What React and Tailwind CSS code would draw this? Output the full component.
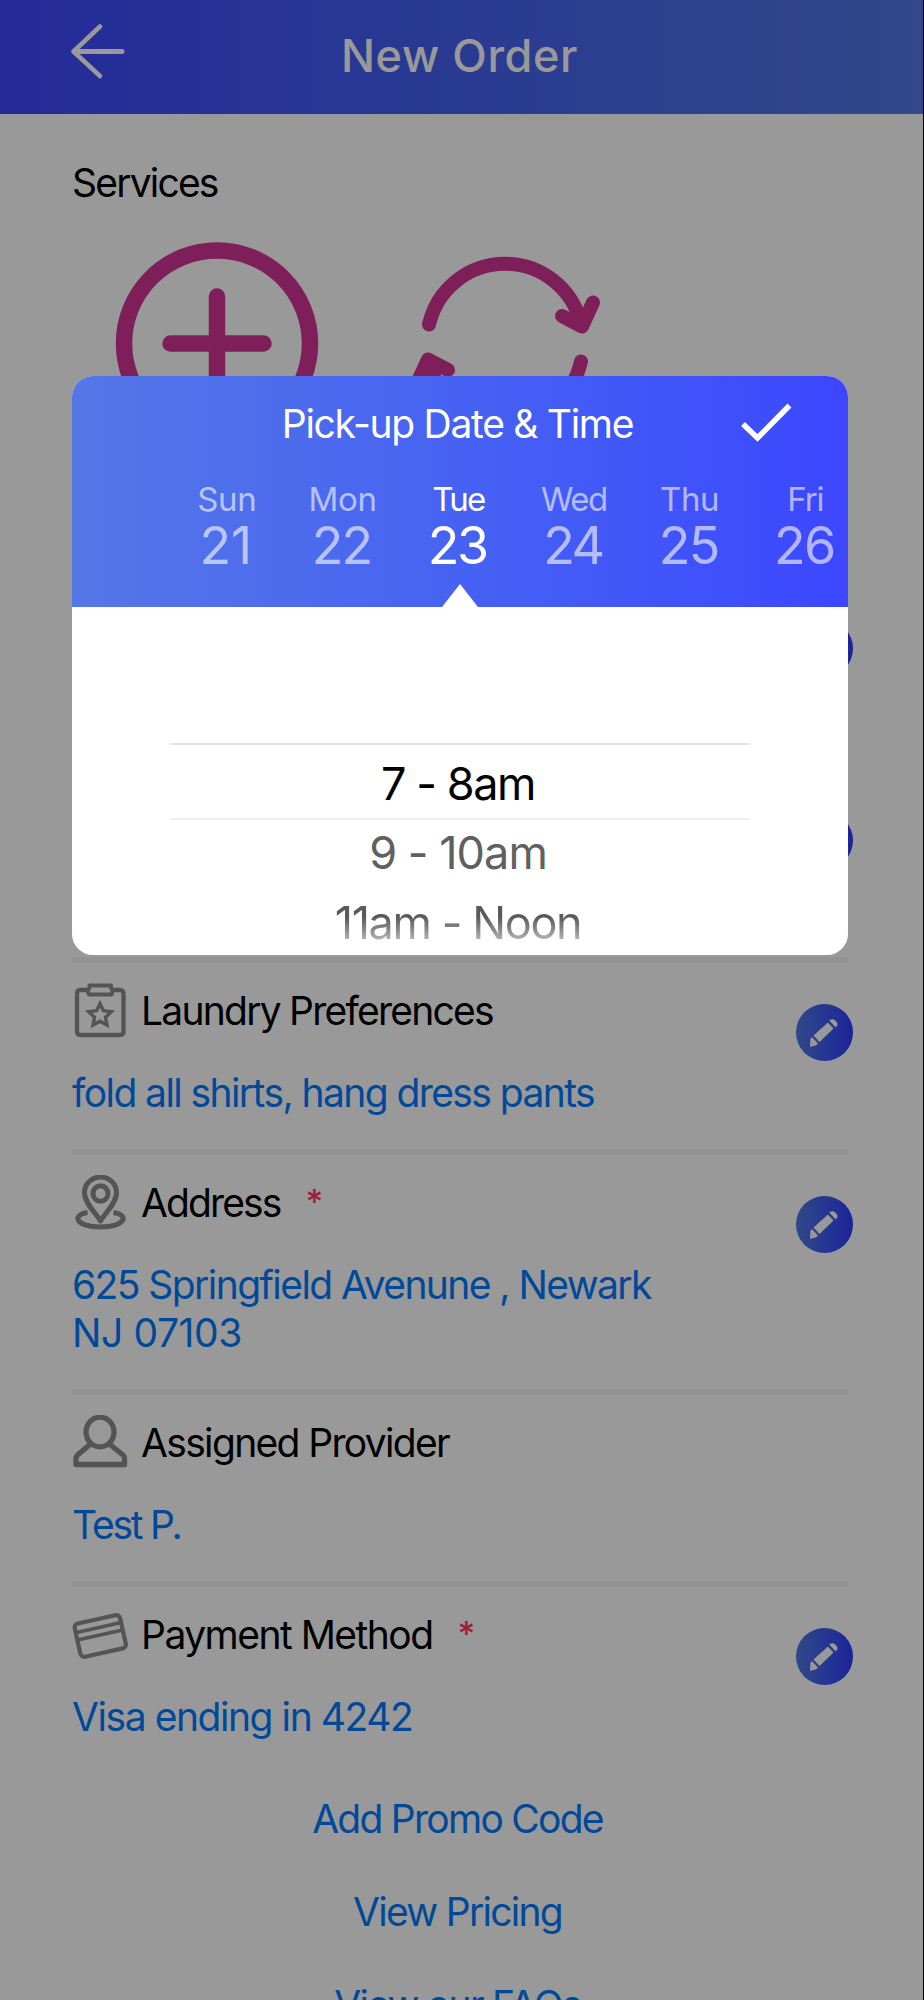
const days = [
  { name: "Sun", date: 21, nameTracking: "tracking-[-0.01em]",  dateTracking: "tracking-normal" },
  { name: "Mon", date: 22, nameTracking: "tracking-[-0.01em]",  dateTracking: "tracking-[-0.035em]" },
  { name: "Tue", date: 23, nameTracking: "tracking-[-0.055em]", dateTracking: "tracking-[-0.045em]" },
  { name: "Wed", date: 24, nameTracking: "tracking-[-0.045em]", dateTracking: "tracking-[-0.05em]" },
  { name: "Thu", date: 25, nameTracking: "tracking-[-0.012em]", dateTracking: "tracking-[-0.035em]" },
  { name: "Fri", date: 26, nameTracking: "tracking-[-0.035em]", dateTracking: "tracking-[-0.035em]" },
]

const links = ["Add Promo Code", "View Pricing", "View our FAQs"]

function BackArrow() {
  return (
    <svg width="60" height="60" viewBox="0 0 60 60" fill="none" stroke="#fff" strokeWidth="5" strokeLinecap="round" strokeLinejoin="round">
      <path d="M32 4.500 5.500 29.500 32 54" strokeWidth="4.500" />
      <path d="M6 29.500H54" />
    </svg>
  )
}

function PlusCircle() {
  return (
    <svg width="262" height="262" viewBox="0 0 262 262" fill="none" stroke="#d43594" strokeWidth="16.500" strokeLinecap="round">
      <circle cx="132" cy="101.500" r="93" />
      <path d="M132 54.500v94M85.500 101.500h93" />
    </svg>
  )
}

function RepeatArrows() {
  return (
    <svg width="262" height="262" viewBox="0 0 262 262" fill="#d43594" stroke="#d43594" strokeWidth="14" strokeLinecap="round" strokeLinejoin="round">
      <path d="M56 82.500A78 78 0 0 1 208 82" fill="none" />
      <path d="M189 74 209 84.500 220 60.500" fill="none" />
      <path d="M198 74 209 84 213 72Z" strokeWidth="4" />
      <path d="M208 119.500A78 78 0 0 1 56 120" fill="none" />
      <path d="M75 128 55 117.500 44 141.500" fill="none" />
      <path d="M66 128 55 118 51 130Z" strokeWidth="4" />
    </svg>
  )
}

function ClipboardIcon() {
  return (
    <svg width="56" height="56" viewBox="0 0 56 56" fill="none" stroke="#8c8c8c" strokeWidth="4.300" strokeLinejoin="round">
      <path d="M16 7H8.500Q5 7 5 10.500V48.500Q5 52 8.500 52H48Q51.500 52 51.500 48.500V10.500Q51.500 7 48 7H40.500" />
      <path d="M17.500 2.500H39V5L41 7.500 39.500 11.500H17L15.500 7.500 17.500 5Z" strokeWidth="4" />
      <path d="M28 20.500 31.400 27.700 39.300 28.800 33.500 34.200 35 42 28 38.200 21 42 22.500 34.200 16.700 28.800 24.600 27.700Z" strokeWidth="3.400" strokeLinejoin="miter" />
    </svg>
  )
}

function PinIcon() {
  return (
    <svg width="56" height="56" viewBox="0 0 56 56" fill="none" stroke="#8c8c8c" strokeWidth="5" strokeLinejoin="round">
      <path d="M28.500 46C24 38 12.500 28.500 12.500 17.500A16 15.500 0 0 1 44.500 17.500C44.500 28.500 33 38 28.500 46Z" />
      <ellipse cx="28.500" cy="18.500" rx="7.500" ry="7.800" />
      <path d="M15.500 37.500C-1 40 4 52 28.500 52S58 40 41.500 37.500" />
    </svg>
  )
}

function PersonIcon() {
  return (
    <svg width="56" height="56" viewBox="0 0 56 56" fill="none" stroke="#8c8c8c" strokeWidth="5.300" strokeLinejoin="round">
      <ellipse cx="28" cy="17" rx="14" ry="14.800" />
      <path d="M18 29.500 5.500 40Q4 41.500 4 43.500V49.500H52.500V43.500Q52.500 41.500 51 40L38 29.500" />
    </svg>
  )
}

function CardIcon() {
  return (
    <svg width="56" height="56" viewBox="0 0 56 56" fill="none" stroke="#8c8c8c" strokeWidth="4.200" strokeLinejoin="round">
      <g transform="rotate(-12.500 28 29)">
        <rect x="5" y="12" width="46.500" height="34" rx="4" />
        <path d="M5 20.500H51.500M5 28H51.500" strokeWidth="3.600" />
      </g>
    </svg>
  )
}

function PencilIcon() {
  return (
    <svg width="30" height="30" viewBox="0 0 30 30" fill="#fff">
      <path d="M4.500 17.500 19 4.500 24.500 10.500 10.500 24Z" />
      <path d="M1 29 1.500 20.500Q2.500 18.800 4 20.200L8.600 25Q8.800 26.800 7 27.300Z" />
      <path d="M20.300 2.800Q23 .2 26 2.300L28 4.500Q29.500 7 26.500 9.300Z" />
    </svg>
  )
}

function EditButton() {
  return (
    <button className="flex size-[57px] items-center justify-center rounded-full bg-linear-to-r from-[#5577e6] to-[#3038ff]">
      <PencilIcon />
    </button>
  )
}

function Section({ icon: Icon, title, tracking, required, editable, children }) {
  return (
    <section className="flex min-h-48 justify-between border-t-[6px] border-[#f6f6f6] pb-[32px]">
      <div className="pt-[24px]">
        <h2 className="flex h-12 items-center text-[39px] leading-[48px] text-black">
          {Icon && <Icon />}
          {title && <span className={`ml-[13px] ${tracking}`}>{title}</span>}
          {required && <span className="ml-[25px] h-12 text-[34px] leading-[46px] font-medium text-[#ff3860]">*</span>}
        </h2>
        <div className="mt-[34px] text-[39px] leading-[48px] whitespace-nowrap text-[#007aff]">{children}</div>
      </div>
      {editable && <div className="-mr-[4.500px] pt-[41px]"><EditButton /></div>}
    </section>
  )
}

function DayPicker() {
  return (
    <div className="ml-[97px] flex flex-1 pt-[33px]">
      {days.map(({ name, date, nameTracking, dateTracking }) => {
        const active = name === "Tue"
        return (
          <div key={name} className={`flex w-[115.700px] shrink-0 flex-col items-center ${active ? "text-white" : "text-white/60"}`}>
            <span className={`text-[33px] leading-[38px] ${nameTracking}`}>{name}</span>
            <span className={`mr-[2px] text-[52px] leading-[56px] ${dateTracking}`}>{date}</span>
            {active && (
              <svg className="mt-auto ml-[3px]" width="36" height="23" viewBox="0 0 36 23" fill="#fff">
                <path d="M18 0 36 23H0Z" />
              </svg>
            )}
          </div>
        )
      })}
    </div>
  )
}

function PickupDialog() {
  return (
    <div className="h-[579px] w-[776px] overflow-hidden rounded-[21px] bg-white">
      <div className="flex h-[231px] flex-col bg-linear-to-r from-[#5577e6] to-[#3c46ff]">
        <div className="flex h-[71px] items-end">
          <h3 className="-mb-px ml-[105px] flex-1 text-center text-[39px] leading-[48px] tracking-[-0.033em] text-white">Pick-up Date &amp; Time</h3>
          <button className="w-[110px] pb-[2px]">
            <svg width="56" height="44" viewBox="0 0 56 44" fill="none" stroke="#fff" strokeWidth="5.500">
              <path d="M5 23 19.500 37 51.500 4.500" />
            </svg>
          </button>
        </div>
        <DayPicker />
      </div>

      {/* Time wheel */}
      <div className="mx-[98px] pt-[136px] text-center text-[45px]">
        <div className="flex h-[77px] items-center justify-center border-t-2 border-b-2 border-t-[#e4e4e4] border-b-[#efefef] pt-[4px] pr-[4px] tracking-[-0.031em] text-black">7 - 8am</div>
        <div className="h-[66px] pr-[4px] leading-[66px] tracking-[-0.021em] text-[#606060]">9 - 10am</div>
        <div className="h-[69px] bg-linear-to-b from-[#5a5a5a] from-45% to-[#b4b4b4] to-78% bg-clip-text pr-[4px] leading-[73px] tracking-[-0.031em] text-transparent">11am - Noon</div>
      </div>
    </div>
  )
}

export default function App() {
  return (
    <div className="relative h-[2000px] w-[924px] overflow-hidden border-r border-black bg-white font-['Inter',sans-serif]">
      <header className="flex h-[114px] bg-linear-to-r from-[#3c46ff] to-[#5577e6] px-[68px]">
        <button className="h-15 w-15 pt-[22px]"><BackArrow /></button>
        <h1 className="flex-1 pt-[29px] text-center text-[45px] leading-[54px] font-medium tracking-[0.013em] text-white">New Order</h1>
        <div className="w-16" />
      </header>

      <main className="mr-[75px] ml-[72px]">
        <div className="h-[459px] pt-[45px]">
          <h2 className="text-[39px] leading-[48px] tracking-[-0.046em] text-black">Services</h2>
          <div className="mt-[35px] ml-[13px] flex gap-[26px]">
            <PlusCircle />
            <RepeatArrows />
          </div>
        </div>

        <Section editable />
        <Section editable />
        <Section icon={ClipboardIcon} title="Laundry Preferences" tracking="tracking-[-0.045em]" editable>
          <span className="tracking-[-0.0405em]">fold all shirts, hang dress pants</span>
        </Section>
        <Section icon={PinIcon} title="Address" tracking="tracking-[-0.048em]" required editable>
          <span className="block tracking-[-0.0404em]">625 Springfield Avenune , Newark</span>
          <span className="block tracking-[-0.01em]">NJ 07103</span>
        </Section>
        <Section icon={PersonIcon} title="Assigned Provider" tracking="tracking-[-0.0425em]">
          <span className="tracking-[-0.057em]">Test P.</span>
        </Section>
        <Section icon={CardIcon} title="Payment Method" tracking="tracking-[-0.039em]" required editable>
          <span className="tracking-[-0.0368em]">Visa ending in 4242</span>
        </Section>

        <div className="flex flex-col items-center gap-[45px] pt-[22px] pr-[5px] text-[39px] leading-[48px] tracking-[-0.0445em] text-[#007aff]">
          {links.map(link => <a key={link}>{link}</a>)}
        </div>
      </main>

      {/* Backdrop */}
      <div className="absolute inset-0 bg-black/40 pt-[376px] pl-[72px]">
        <PickupDialog />
      </div>
    </div>
  )
}
